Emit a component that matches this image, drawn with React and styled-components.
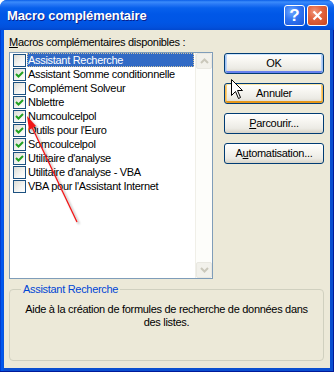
import React from "react";
import styled, { createGlobalStyle } from "styled-components";

const Global = createGlobalStyle`
  html, body { margin: 0; padding: 0; background: #ffffff; }
  body { font-family: "Liberation Sans", Arial, sans-serif; }
`;

const UI_FONT = `"Liberation Sans", Arial, sans-serif`;

const Window = styled.div`
  position: relative;
  width: 334px;
  height: 372px;
  display: flex;
  flex-direction: column;
  border-radius: 7px 7px 0 0;
  overflow: hidden;
  background: #0053e2;
`;

const TitleBar = styled.div`
  height: 30px;
  flex: none;
  display: flex;
  align-items: center;
  padding: 0 6px 0 7px;
  box-sizing: border-box;
  background: linear-gradient(
    to bottom,
    #0a5ee8 0px,
    #3b8cfb 2px,
    #2a7af6 4px,
    #0760ec 8px,
    #0057e7 14px,
    #0056e5 22px,
    #0251dd 27px,
    #0148cf 30px
  );
`;

const Title = styled.div`
  flex: 1;
  font-family: "Liberation Sans", Arial, sans-serif;
  font-weight: bold;
  font-size: 13px;
  letter-spacing: -0.1px;
  color: #ffffff;
  text-shadow: 1px 1px 0 #0a1e8a;
  padding-top: 1px;
`;

const CaptionButtons = styled.div`
  display: flex;
  gap: 2px;
  padding-top: 1px;
`;

const CaptionButton = styled.div`
  width: 21px;
  height: 21px;
  box-sizing: border-box;
  border: 1px solid #ffffff;
  border-radius: 3px;
  display: flex;
  align-items: center;
  justify-content: center;
  background: ${(p) =>
    p.$close
      ? "radial-gradient(circle at 35% 30%, #f0977b 0%, #e2643f 40%, #c9461e 100%)"
      : "radial-gradient(circle at 35% 30%, #6fa8ff 0%, #2f74f2 45%, #1c55d8 100%)"};
  color: #ffffff;
  font-family: "Liberation Sans", Arial, sans-serif;
  font-weight: bold;
  font-size: 17px;
  line-height: 1;
`;

const Frame = styled.div`
  flex: 1;
  display: flex;
  padding: 0 4px 4px;
  background: linear-gradient(to right, #0022b0 0, #0058ee 1px, #0058ee 3px, #0b4fd0 4px);
  box-shadow: inset -1px -1px 0 #001a9a;
`;

const Body = styled.div`
  flex: 1;
  display: flex;
  flex-direction: column;
  background: #ece9d8;
  padding: 6px 6px 7px 5px;
  font-family: ${UI_FONT};
  font-size: 11px;
  letter-spacing: -0.3px;
  line-height: 13px;
  color: #000000;
`;

const FieldLabel = styled.div`
  height: 13px;
  margin-bottom: 3px;
`;

const MainRow = styled.div`
  display: flex;
  gap: 11px;
  align-items: flex-start;
`;

const ListBox = styled.div`
  width: 204px;
  height: 227px;
  box-sizing: border-box;
  border: 1px solid #7f9db9;
  background: #ffffff;
  display: flex;
`;

const Items = styled.div`
  flex: 1;
  display: flex;
  flex-direction: column;
`;

const Item = styled.div`
  height: 14px;
  display: flex;
  align-items: center;
  padding-left: 3px;
`;

const Check = styled.div`
  width: 13px;
  height: 13px;
  box-sizing: border-box;
  border: 1px solid #1c5180;
  background: linear-gradient(135deg, #dcdcd5 0%, #f5f5f2 60%, #ffffff 100%);
  display: flex;
  align-items: center;
  justify-content: center;
  flex: none;
`;

const ItemText = styled.div`
  margin: 0 1px 0 1px;
  flex: 1;
  height: 14px;
  box-sizing: border-box;
  padding: 0;
  white-space: nowrap;
  background: ${(p) => (p.$selected ? "#316ac5" : "transparent")};
  color: ${(p) => (p.$selected ? "#ffffff" : "#000000")};
  border: 1px dotted ${(p) => (p.$selected ? "#cfc2a0" : "transparent")};
  display: flex;
  align-items: center;
`;

const ScrollBar = styled.div`
  width: 17px;
  flex: none;
  display: flex;
  flex-direction: column;
  background: #fdfdfa;
  border-left: 1px solid #f0efe8;
  box-sizing: border-box;
`;

const ScrollArrow = styled.div`
  width: 16px;
  height: 16px;
  box-sizing: border-box;
  border: 1px solid #e9e8e1;
  border-radius: 2px;
  background: #f2f1eb;
  display: flex;
  align-items: center;
  justify-content: center;
`;

const Track = styled.div`
  flex: 1;
`;

const ButtonColumn = styled.div`
  display: flex;
  flex-direction: column;
  gap: 9px;
  margin-top: 1px;
`;

const Button = styled.div`
  width: 100px;
  height: 21px;
  box-sizing: border-box;
  border: 1px solid #003c74;
  border-radius: 3px;
  display: flex;
  align-items: center;
  justify-content: center;
  background: linear-gradient(to bottom, #ffffff 0%, #f6f5f0 40%, #ecebe5 75%, #d8d4c8 100%);
  box-shadow: ${(p) =>
    p.$hot
      ? "inset 0 1px 0 #ffe7a2, inset 1px 0 0 #f8b84a, inset -1px 0 0 #f8b84a, inset 0 -2px 0 #e5971a, inset 2px 0 0 #fbd07a, inset -2px 0 0 #fbd07a"
      : p.$default
      ? "inset 0 1px 0 #cee7ff, inset 1px 0 0 #a0c4f5, inset -1px 0 0 #a0c4f5, inset 0 -2px 0 #6982ee, inset 2px 0 0 #bcd4f6, inset -2px 0 0 #bcd4f6"
      : "none"};
  font-size: 11px;
  color: #000000;
`;

const GroupBox = styled.fieldset`
  margin: 4px 0 0 0;
  height: 78px;
  box-sizing: border-box;
  border: 1px solid #d0d0bf;
  border-radius: 4px;
  padding: 7px 8px 0;
  min-width: 0;
`;

const GroupLegend = styled.legend`
  color: #0046d5;
  padding: 0 2px;
  margin-left: 3px;
  font-size: 11px;
  line-height: 13px;
`;

const Description = styled.div`
  text-align: center;
  line-height: 13px;
`;

const Overlay = styled.svg`
  position: absolute;
  left: 0;
  top: 0;
  pointer-events: none;
`;

const Cursor = styled.svg`
  position: absolute;
  left: 231px;
  top: 79px;
  pointer-events: none;
`;

const CheckMark = () => (
  <svg width="9" height="9" viewBox="0 0 9 9">
    <path d="M1 4 L3.5 6.5 L8 2" fill="none" stroke="#21a121" strokeWidth="2" />
  </svg>
);

const Arrow = ({ down }) => (
  <svg width="9" height="6" viewBox="0 0 9 6">
    <path
      d={down ? "M1 1 L4.5 4.5 L8 1" : "M1 5 L4.5 1.5 L8 5"}
      fill="none"
      stroke="#cac8bb"
      strokeWidth="2"
    />
  </svg>
);

const items = [
  { name: "Assistant Recherche", checked: false, selected: true },
  { name: "Assistant Somme conditionnelle", checked: true },
  { name: "Complément Solveur", checked: false },
  { name: "Nblettre", checked: true },
  { name: "Numcoulcelpol", checked: true },
  { name: "Outils pour l'Euro", checked: true },
  { name: "Somcoulcelpol", checked: true },
  { name: "Utilitaire d'analyse", checked: true },
  { name: "Utilitaire d'analyse - VBA", checked: false },
  { name: "VBA pour l'Assistant Internet", checked: false },
];

export default function App() {
  return (
    <>
      <Global />
      <Window>
        <TitleBar>
          <Title>Macro complémentaire</Title>
          <CaptionButtons>
            <CaptionButton>?</CaptionButton>
            <CaptionButton $close>
              <svg width="11" height="11" viewBox="0 0 11 11">
                <path d="M1.5 1.5 L9.5 9.5 M9.5 1.5 L1.5 9.5" stroke="#fff" strokeWidth="2.2" />
              </svg>
            </CaptionButton>
          </CaptionButtons>
        </TitleBar>
        <Frame>
          <Body>
            <FieldLabel>
              <u>M</u>acros complémentaires disponibles :
            </FieldLabel>
            <MainRow>
              <ListBox>
                <Items>
                  {items.map((it) => (
                    <Item key={it.name}>
                      <Check>{it.checked && <CheckMark />}</Check>
                      <ItemText $selected={it.selected}>{it.name}</ItemText>
                    </Item>
                  ))}
                </Items>
                <ScrollBar>
                  <ScrollArrow>
                    <Arrow />
                  </ScrollArrow>
                  <Track />
                  <ScrollArrow>
                    <Arrow down />
                  </ScrollArrow>
                </ScrollBar>
              </ListBox>
              <ButtonColumn>
                <Button $default>OK</Button>
                <Button $hot>Annuler</Button>
                <Button>
                  <span>
                    <u>P</u>arcourir...
                  </span>
                </Button>
                <Button>
                  <span>
                    A<u>u</u>tomatisation...
                  </span>
                </Button>
              </ButtonColumn>
            </MainRow>
            <GroupBox>
              <GroupLegend>Assistant Recherche</GroupLegend>
              <Description>
                Aide à la création de formules de recherche de données dans des listes.
              </Description>
            </GroupBox>
          </Body>
        </Frame>
        <Overlay width="334" height="372" viewBox="0 0 334 372">
          <defs>
            <filter id="sh" x="-20%" y="-20%" width="140%" height="140%">
              <feDropShadow dx="2" dy="2" stdDeviation="1.2" floodColor="#000" floodOpacity="0.35" />
            </filter>
          </defs>
          <g filter="url(#sh)">
            <line x1="77" y1="222" x2="31" y2="125" stroke="#f01818" strokeWidth="1.3" />
            <polygon points="27,116 36,126 29,130" fill="#f01818" />
          </g>
        </Overlay>
        <Cursor width="13" height="21" viewBox="0 0 13 21">
          <path
            d="M0.5 0.5 L0.5 16.5 L4.5 12.5 L7.5 19.5 L9.5 18.5 L6.5 11.5 L11.5 11.5 Z"
            fill="#ffffff"
            stroke="#000000"
            strokeWidth="1"
          />
        </Cursor>
      </Window>
    </>
  );
}
